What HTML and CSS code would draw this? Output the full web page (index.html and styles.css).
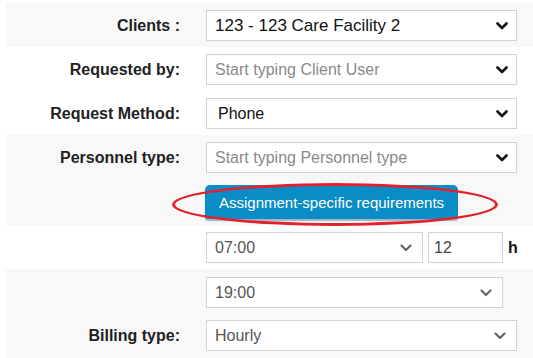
FILE: index.html
```html
<!DOCTYPE html>
<html lang="en">
<head>
	<meta charset="UTF-8">
	<meta name="viewport" content="width=device-width, initial-scale=1.0">
	<title>New request</title>
	<link rel="stylesheet" href="styles.css">
</head>
<body>

<div id="requestForm">

	<div class="row striped">
		<label class="fieldLabel">Clients :</label>
		<div class="select">
			<span class="value clientValue">123 - 123 Care Facility 2</span>
			<svg class="chevron" width="12" height="8" viewBox="0 0 12 8"><path d="M1.5 1.5 L6 6 L10.5 1.5" /></svg>
		</div>
	</div>

	<div class="row">
		<label class="fieldLabel">Requested by:</label>
		<div class="select">
			<span class="placeholder">Start typing Client User</span>
			<svg class="chevron" width="12" height="8" viewBox="0 0 12 8"><path d="M1.5 1.5 L6 6 L10.5 1.5" /></svg>
		</div>
	</div>

	<div class="row">
		<label class="fieldLabel">Request Method:</label>
		<div class="select native">
			<span class="value">Phone</span>
			<svg class="chevron" width="12" height="8" viewBox="0 0 12 8"><path d="M1.5 1.5 L6 6 L10.5 1.5" /></svg>
		</div>
	</div>

	<div class="row striped">
		<label class="fieldLabel">Personnel type:</label>
		<div class="select">
			<span class="placeholder">Start typing Personnel type</span>
			<svg class="chevron" width="12" height="8" viewBox="0 0 12 8"><path d="M1.5 1.5 L6 6 L10.5 1.5" /></svg>
		</div>
		<span></span>
		<div class="buttonCell">
			<button class="btnRequirements">Assignment-specific requirements</button>
			<div class="markCircle"></div>
		</div>
	</div>

	<div class="row">
		<span></span>
		<div class="timeLine">
			<div class="select muted startTime">
				<span class="value">07:00</span>
				<svg class="chevron" width="12" height="8" viewBox="0 0 12 8"><path d="M1.5 1.5 L6 6 L10.5 1.5" /></svg>
			</div>
			<input class="hoursInput" type="text" value="12">
			<b class="unit">h</b>
		</div>
	</div>

	<div class="row striped last">
		<span></span>
		<div class="select muted endTime">
			<span class="value">19:00</span>
			<svg class="chevron" width="12" height="8" viewBox="0 0 12 8"><path d="M1.5 1.5 L6 6 L10.5 1.5" /></svg>
		</div>
		<label class="fieldLabel">Billing type:</label>
		<div class="select muted">
			<span class="value">Hourly</span>
			<svg class="chevron" width="12" height="8" viewBox="0 0 12 8"><path d="M1.5 1.5 L6 6 L10.5 1.5" /></svg>
		</div>
	</div>

</div>

</body>
</html>
```

FILE: styles.css
```css
body {
	margin: 0;
	font-family: "Liberation Sans", Arial, sans-serif;
	font-size: 16px;
	color: #222;
	background-color: #fff;
	overflow: hidden;
}

#requestForm {
	padding: 3px 0 0 6px;
}

.row {
	display: grid;
	grid-template-columns: 174px 311px;
	column-gap: 26px;
	row-gap: 12px;
	align-items: center;
	padding: 7px 0 6px;
}

.striped {
	background-color: #f8f8f8;
}

.last {
	padding-top: 8px;
	padding-bottom: 12px;
}

.fieldLabel {
	font-weight: bold;
	text-align: right;
	color: #222;
}

.select {
	display: flex;
	align-items: center;
	justify-content: space-between;
	box-sizing: border-box;
	height: 31px;
	padding: 0 8px 0 8px;
	border: 1px solid #d2d2d2;
	background-color: #fff;
}

.select .value {
	color: #111;
}

.select .clientValue {
	font-size: 17px;
}

.select .placeholder {
	color: #8a8a8a;
}

.native {
	padding-left: 11px;
}

.chevron path {
	fill: none;
	stroke: #111;
	stroke-width: 2.6;
	stroke-linecap: round;
	stroke-linejoin: round;
}

.muted .value {
	color: #555;
}

.muted .chevron path {
	stroke: #666;
	stroke-width: 2.2;
}

.muted {
	padding-right: 10px;
}

.buttonCell {
	position: relative;
	height: 34px;
}

.btnRequirements {
	height: 34px;
	margin-left: -1px;
	padding: 0 14px;
	font-family: "Liberation Sans", Arial, sans-serif;
	font-size: 15px;
	color: #fff;
	background-color: #0a8cc6;
	border: none;
	border-radius: 5px 5px 3px 3px;
	box-shadow: 0 2px 1px rgba(0, 60, 100, 0.35);
}

/* red annotation ring drawn over the button */
.markCircle {
	position: absolute;
	left: -34px;
	top: -2px;
	width: 320px;
	height: 37px;
	border: 3px solid #e3202b;
	border-radius: 50%;
}

.timeLine {
	display: flex;
	align-items: center;
	gap: 5px;
	width: 320px;
}

.startTime {
	width: 217px;
}

.hoursInput {
	box-sizing: border-box;
	width: 75px;
	height: 31px;
	padding: 0 5px;
	font-family: "Liberation Sans", Arial, sans-serif;
	font-size: 16px;
	color: #444;
	border: 1px solid #d2d2d2;
}

.unit {
	font-size: 16px;
	color: #111;
}

.endTime {
	width: 297px;
}
```
